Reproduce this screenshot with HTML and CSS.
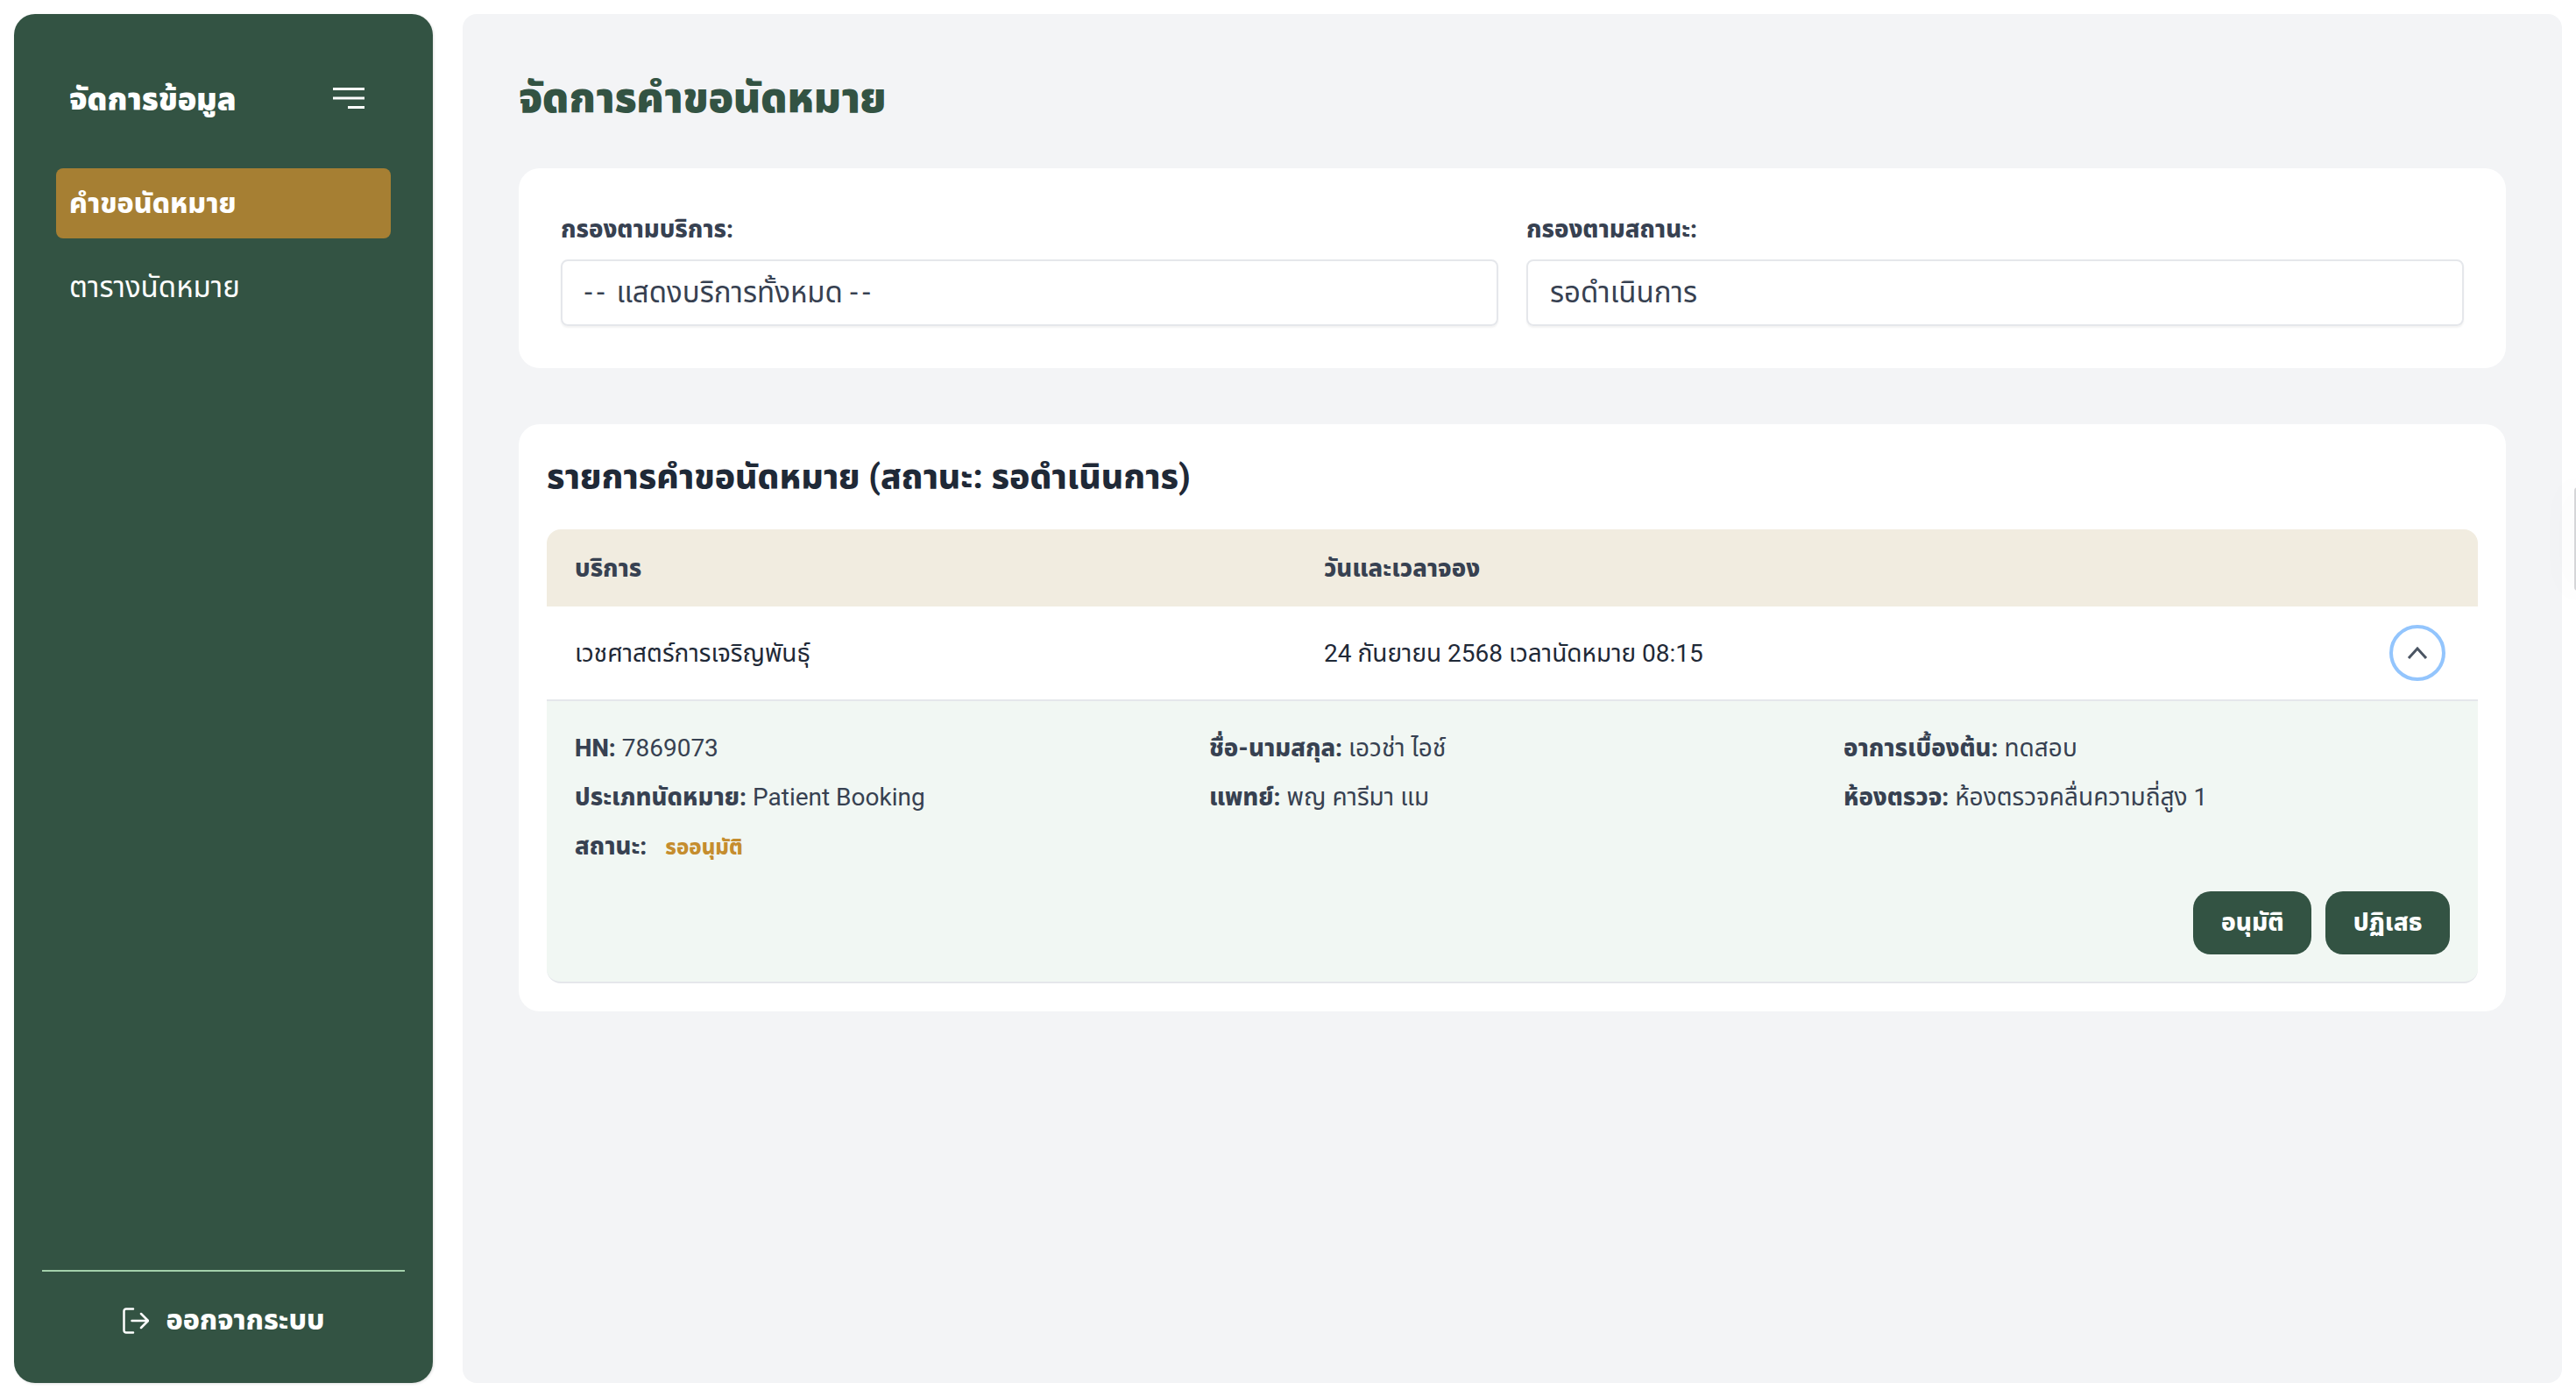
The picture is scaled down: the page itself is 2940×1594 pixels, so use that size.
FILE: index.html
```html
<!DOCTYPE html>
<html lang="th">
<head>
    <meta charset="UTF-8">
    <title>จัดการคำขอนัดหมาย</title>
    <link rel="stylesheet" href="styles.css">
</head>
<body>
    <div class="layout">
        <aside class="sidebar">
            <div class="sidebar-head">
                <span class="brand">จัดการข้อมูล</span>
                <svg class="menu-icon" width="36" height="24" viewBox="0 0 36 24" fill="none" stroke="#fff" stroke-width="3">
                    <path d="M0 1.5h36M0 12h36M17 22.5h19"/>
                </svg>
            </div>
            <nav class="nav">
                <a class="nav-item active">คำขอนัดหมาย</a>
                <a class="nav-item">ตารางนัดหมาย</a>
            </nav>
            <div class="sidebar-foot">
                <a class="logout">
                    <svg width="30" height="30" viewBox="0 0 30 30" fill="none" stroke="#fff" stroke-width="2.5" stroke-linecap="round" stroke-linejoin="round">
                        <path d="M12 1.5H4A2.5 2.5 0 0 0 1.5 4v22A2.5 2.5 0 0 0 4 28.5h8M10.5 15h18.5M21 7l8 8-8 8"/>
                    </svg>
                    ออกจากระบบ
                </a>
            </div>
        </aside>

        <main class="main">
            <h1>จัดการคำขอนัดหมาย</h1>

            <section class="card filters">
                <div class="field">
                    <label>กรองตามบริการ:</label>
                    <div class="select"><span><span class="dash">--</span> แสดงบริการทั้งหมด <span class="dash">--</span></span></div>
                </div>
                <div class="field">
                    <label>กรองตามสถานะ:</label>
                    <div class="select">รอดำเนินการ</div>
                </div>
            </section>

            <section class="card list">
                <h2>รายการคำขอนัดหมาย (สถานะ: รอดำเนินการ)</h2>
                <div class="table-head">
                    <div class="col-service">บริการ</div>
                    <div>วันและเวลาจอง</div>
                </div>
                <div class="table-row">
                    <div class="col-service">เวชศาสตร์การเจริญพันธุ์</div>
                    <div class="col-date">24 กันยายน 2568 เวลานัดหมาย 08:15</div>
                    <button class="toggle">
                        <svg width="24" height="14" viewBox="0 0 24 14" fill="none" stroke="#4b5563" stroke-width="3">
                            <path d="M2 13L12 2l10 11"/>
                        </svg>
                    </button>
                </div>
                <div class="details">
                    <div class="details-grid">
                        <p><b>HN:</b> 7869073</p>
                        <p><b>ชื่อ-นามสกุล:</b> เอวช่า ไอช์</p>
                        <p><b>อาการเบื้องต้น:</b> ทดสอบ</p>
                        <p><b>ประเภทนัดหมาย:</b> Patient Booking</p>
                        <p><b>แพทย์:</b> พญ คารีมา แม</p>
                        <p><b>ห้องตรวจ:</b> ห้องตรวจคลื่นความถี่สูง 1</p>
                        <p><b>สถานะ:</b> <span class="badge">รออนุมัติ</span></p>
                    </div>
                    <div class="actions">
                        <button class="btn">อนุมัติ</button>
                        <button class="btn">ปฏิเสธ</button>
                    </div>
                </div>
            </section>
        </main>
    </div>
    <div class="edge-handle"></div>
</body>
</html>
```

FILE: styles.css
```css
* {
    box-sizing: border-box;
}

html, body {
    height: 100%;
}

body {
    margin: 0;
    overflow: hidden;
    background-color: #ffffff;
    color: #374151;
    font-family: Roboto, "Noto Sans Thai", "Noto Sans", sans-serif;
    font-size: 28px;
}

b {
    font-size: 27.5px;
    font-weight: 800;
}

.layout {
    display: flex;
    gap: 34px;
    height: 1594px;
    padding: 16px;
}

.sidebar {
    width: 478px;
    flex-shrink: 0;
    display: flex;
    flex-direction: column;
    background-color: #335343;
    border-radius: 24px;
    box-shadow: 1px 1px 3px rgba(0, 0, 0, 0.12);
    color: #fff;
    padding: 0 48px;
}

.sidebar-head {
    display: flex;
    align-items: center;
    justify-content: space-between;
    height: 176px;
    padding: 16px 30px 0 15px;
}

.brand {
    padding-top: 4px;
    font-size: 35.5px;
    font-weight: 900;
}

.nav {
    display: flex;
    flex-direction: column;
    gap: 16px;
    flex: 1;
}

.nav-item {
    display: flex;
    align-items: center;
    height: 80px;
    padding: 2px 15px 0;
    border-radius: 8px;
    font-size: 33px;
}

.nav-item.active {
    background-color: #a67f33;
    font-size: 32px;
    font-weight: 800;
}

.sidebar-foot {
    margin: 0 -16px;
    border-top: 2px solid #a3d0ab;
    height: 129px;
    padding-bottom: 16px;
    display: flex;
    align-items: center;
    justify-content: center;
}

.logout {
    display: flex;
    align-items: center;
    gap: 20px;
    font-size: 32px;
    font-weight: 800;
}

.main {
    flex: 1;
    background-color: #f3f4f6;
    border-radius: 16px;
    padding: 64px;
}

h1 {
    margin: 0 0 48px;
    font-size: 47px;
    line-height: 64px;
    font-weight: 900;
    color: #335343;
}

.card {
    background-color: #fff;
    border-radius: 24px;
}

.filters {
    display: grid;
    grid-template-columns: 1fr 1fr;
    gap: 32px;
    padding: 48px;
    height: 228px;
    margin-bottom: 64px;
}

.field label {
    display: block;
    font-size: 27.5px;
    font-weight: 800;
    line-height: 44px;
    margin-bottom: 12px;
}

.select {
    height: 76px;
    display: flex;
    align-items: center;
    padding: 2px 25px 0;
    border: 2px solid #e5e7eb;
    border-radius: 8px;
    box-shadow: 0 2px 2px rgba(0, 0, 0, 0.05);
    font-size: 33px;
}

.dash {
    letter-spacing: 5px;
}

.list {
    padding: 32px;
    height: 670px;
}

h2 {
    margin: 0 0 32px;
    font-size: 39px;
    line-height: 56px;
    font-weight: 800;
    color: #1f2937;
}

.table-head, .table-row {
    display: flex;
    align-items: center;
    padding: 0 32px;
}

.table-head {
    height: 88px;
    padding-top: 2px;
    background-color: #f1ece0;
    border-radius: 16px 16px 0 0;
    font-size: 27.5px;
    font-weight: 800;
}

.col-service {
    width: 855px;
}

.table-row {
    height: 108px;
    border-bottom: 2px solid #e5e7eb;
    color: #1f2937;
}

.table-row .col-service, .col-date {
    padding-top: 2px;
}

.col-date {
    flex: 1;
}

.toggle {
    width: 64px;
    height: 64px;
    display: flex;
    align-items: center;
    justify-content: center;
    background: none;
    border: 4px solid #93c5fd;
    border-radius: 50%;
    padding: 0;
    margin-right: 5px;
}

.details {
    height: 322px;
    padding: 34px 32px 32px;
    background-color: #f1f7f3;
    border-bottom: 2px solid #e5e7eb;
    border-radius: 0 0 16px 16px;
}

.details-grid {
    display: grid;
    grid-template-columns: repeat(3, 1fr);
    column-gap: 32px;
    row-gap: 16px;
}

.details-grid p {
    margin: 0;
    line-height: 40px;
}

.badge {
    color: #c58d2e;
    font-weight: 800;
    font-size: 24px;
    margin-left: 14px;
}

.actions {
    display: flex;
    justify-content: flex-end;
    gap: 16px;
    margin-top: 30px;
}

.btn {
    height: 72px;
    padding: 0 31.5px;
    background-color: #335343;
    color: #fff;
    border: none;
    border-radius: 20px;
    font-family: inherit;
    font-size: 28px;
    font-weight: 800;
}

/* sliver of a panel that sits off the right edge */
.edge-handle {
    position: fixed;
    right: -6px;
    top: 556px;
    width: 8px;
    height: 118px;
    border-radius: 8px;
    background-color: #d5d6d8;
    box-shadow: 0 0 40px rgba(0, 0, 0, 0.08);
}
```
